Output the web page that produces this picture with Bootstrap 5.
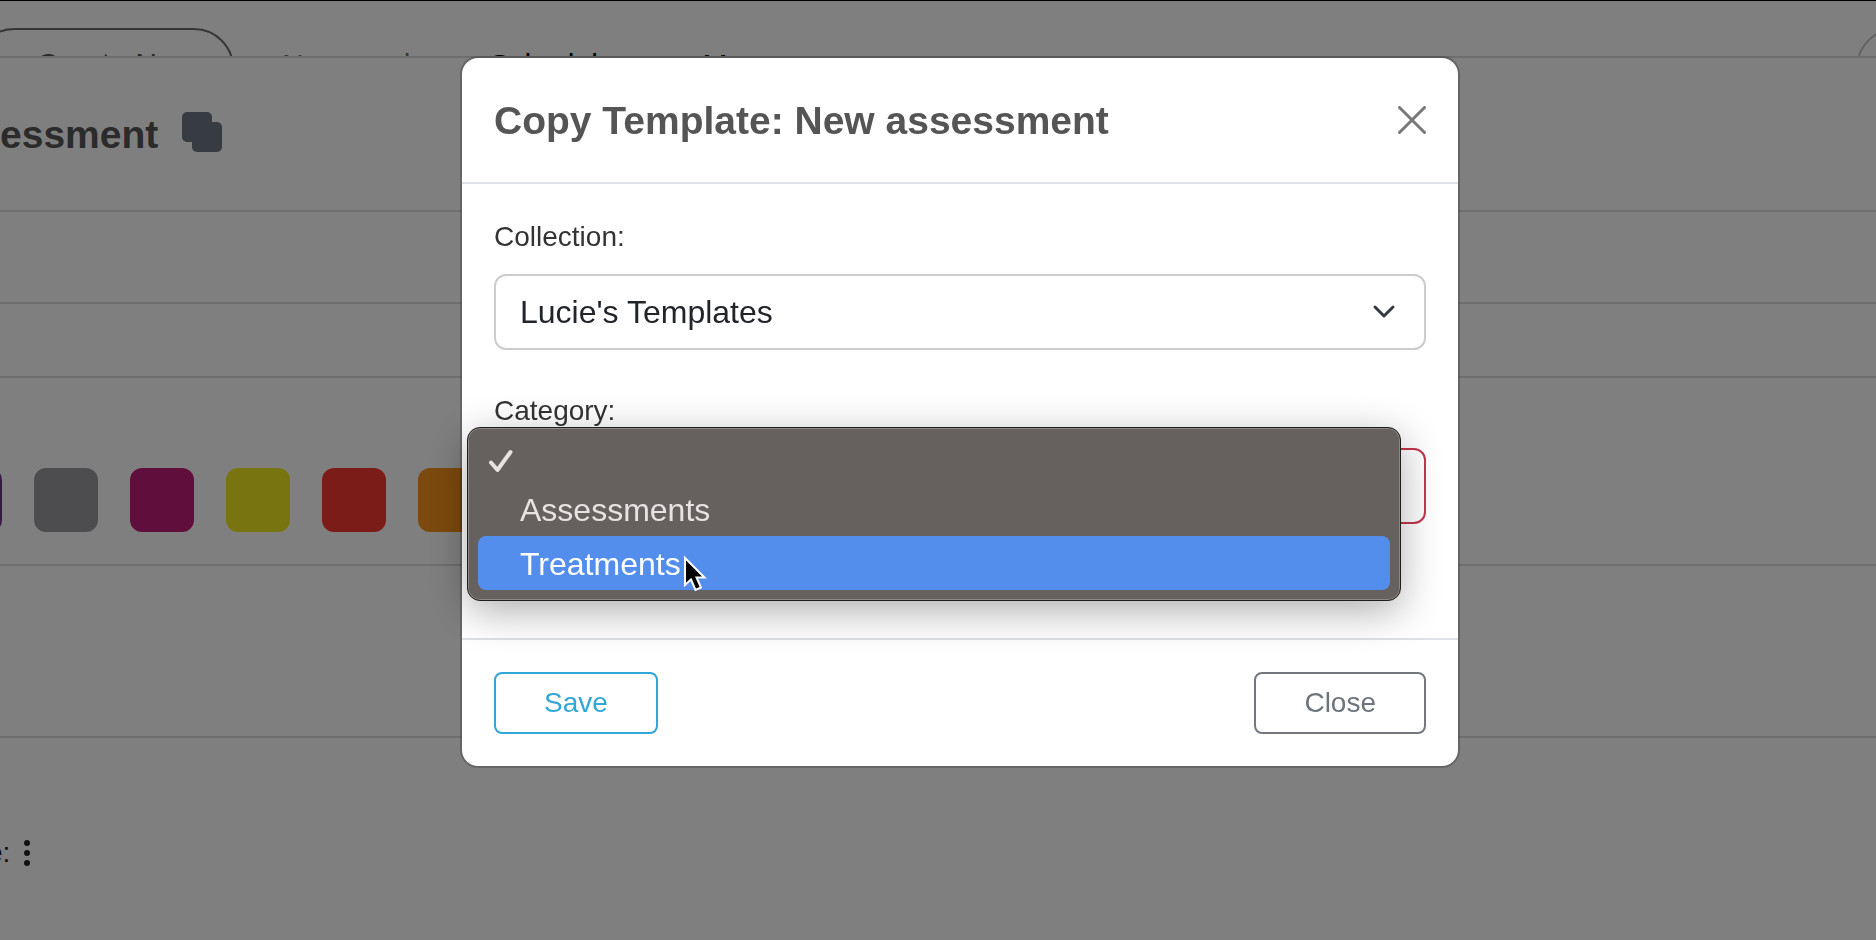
<!DOCTYPE html>
<html lang="en">
<head>
<meta charset="utf-8">
<meta name="viewport" content="width=device-width, initial-scale=1">
<title>Copy Template</title>
<link href="https://cdn.jsdelivr.net/npm/bootstrap@5.3.0/dist/css/bootstrap.min.css" rel="stylesheet">
<style>
  body { font-family: "Liberation Sans", Arial, sans-serif; font-size: 28px; line-height: 42px; color: #212529; background: #fff; }
  .page-shell { height: 100vh; overflow: hidden; border-top: 1px solid #000; }

  /* top bar, partly scrolled under the editor panel */
  .top-strip { height: 57px; overflow: hidden; padding-top: 27px; border-bottom: 2px solid #dcdcdc; gap: 48px; }
  .create-btn { flex: none; height: 80px; width: 260px; margin-left: -26px; padding: 0 0 8px 24px; border: 2px solid #6c6c6c; border-radius: 40px; font-size: 30px; line-height: 60px; color: #565656; }
  .strip-link { font-size: 30px; line-height: 74px; text-decoration: none; white-space: nowrap; }
  .strip-gap { gap: 64px; }
  .avatar-ring { flex: none; width: 80px; height: 80px; border: 2px solid #c8c8c8; border-radius: 50%; margin-right: -60px; }

  /* editor panel rows */
  .panel-row { border-bottom: 2px solid #dcdcdc; }
  .row-title { height: 154px; gap: 24px; }
  .row-title h1 { font-size: 39px; line-height: 60px; padding-top: 2px; font-weight: 700; color: #565656; }
  .row-a { height: 92px; }
  .row-b { height: 74px; }
  .row-swatches { height: 188px; gap: 32px; margin-left: -62px; padding-top: 58px; }
  .row-c { height: 172px; }
  .row-field { padding-top: 94px; margin-left: -13px; gap: 13px; }
  .swatch-btn { flex: none; width: 64px; height: 64px; border: 0; border-radius: 12px; }

  /* dialog */
  .copy-modal { padding-left: 44px; }
  .copy-modal .modal-dialog { max-width: 1000px; margin: 56px auto 0; }
  .copy-modal .modal-content { border: 2px solid rgba(0,0,0,.2); border-radius: 18px; }
  .copy-modal .modal-header { padding: 32px; border-bottom: 2px solid #dee2e6; }
  .copy-modal .modal-title { font-size: 39px; line-height: 58px; padding-top: 2px; font-weight: 700; color: #555; }
  .x-btn { width: 28px; height: 28px; color: #777; }
  .copy-modal .modal-body { padding: 32px 32px 114px; }
  .copy-modal .form-label { display: block; margin-bottom: 16px; color: #333; }
  .copy-modal .form-select { height: 76px; padding: 0 72px 0 24px; border: 2px solid #ccc; border-radius: 12px; font-size: 32px; line-height: 48px; color: #212529;
    background-image: url("data:image/svg+xml,%3csvg xmlns='http://www.w3.org/2000/svg' viewBox='0 0 24 24'%3e%3cpath fill='none' stroke='%23343a40' stroke-width='3' stroke-linecap='round' stroke-linejoin='round' d='m3 7 9 9 9-9'/%3e%3c/svg%3e");
    background-size: 24px 24px; background-position: right 28px center; }
  .copy-modal .form-select.needs-value { border-color: #c5364b; background-image: none; }
  .second-field { margin-top: 40px; }
  .option-menu { position: absolute; top: -21px; left: -27px; right: 25px; padding: 8px 10px 10px; border: 1px solid #1f1d1d; border-radius: 13px; background: #66615f; box-shadow: inset 0 0 0 1px #8d8987, 0 10px 40px rgba(0,0,0,.32); color: #e8e2e2; font-size: 32px; line-height: 52px; }
  .option-menu li { padding: 2px 0 0 42px; border-radius: 8px; }
  .option-menu li.picked { height: 46px; padding: 4px 0 0 10px; display: flex; align-items: center; }
  .option-menu li.hovered { background: #538eed; color: #fff; }
  .pointer { position: absolute; left: 215px; top: 127px; }
  .copy-modal .modal-footer { padding: 32px; border-top: 2px solid #dee2e6; }
  .copy-modal .modal-footer > * { margin: 0; }
  .foot-btn { padding: 8px 48px; border-width: 2px; border-radius: 8px; font-size: 28px; line-height: 42px; }
  .save-btn { color: #32a6d6; border-color: #32a6d6; }
  .close-btn { color: #6c757d; border-color: #74777d; }
</style>
</head>
<body>
<div class="page-shell">
  <header class="top-strip d-flex align-items-start">
    <button type="button" class="create-btn bg-transparent">Create New</button>
    <nav class="d-flex strip-gap">
      <a href="#" class="strip-link text-secondary">Name only</a>
      <a href="#" class="strip-link text-black">Schedule</a>
      <a href="#" class="strip-link text-black ms-4">More</a>
    </nav>
    <span class="avatar-ring ms-auto"></span>
  </header>
  <main>
    <div class="panel-row row-title d-flex align-items-center">
      <h1 class="mb-0">essment</h1>
      <button type="button" class="btn p-0 pb-1 border-0 d-flex" aria-label="Copy template">
        <svg width="40" height="40" viewBox="0 0 40 40" fill="#6e7684"><rect width="30" height="30" rx="5"/><rect x="10" y="10" width="30" height="30" rx="5"/></svg>
      </button>
    </div>
    <div class="panel-row row-a"></div>
    <div class="panel-row row-b"></div>
    <div class="panel-row row-swatches d-flex align-items-center">
      <button type="button" class="swatch-btn" style="background:#74348a" aria-label="Violet"></button>
      <button type="button" class="swatch-btn" style="background:#9a9a9e" aria-label="Grey"></button>
      <button type="button" class="swatch-btn" style="background:#c01c78" aria-label="Magenta"></button>
      <button type="button" class="swatch-btn" style="background:#f0e81e" aria-label="Yellow"></button>
      <button type="button" class="swatch-btn" style="background:#f83830" aria-label="Red"></button>
      <button type="button" class="swatch-btn" style="background:#f8941c" aria-label="Orange"></button>
    </div>
    <div class="panel-row row-c"></div>
    <div class="row-field d-flex align-items-center">
      <span>e:</span>
      <button type="button" class="btn p-0 border-0 d-flex" aria-label="More options">
        <svg width="8" height="28" viewBox="0 0 8 28" fill="#212529"><circle cx="4" cy="4" r="3"/><circle cx="4" cy="14" r="3"/><circle cx="4" cy="24" r="3"/></svg>
      </button>
    </div>
  </main>
</div>

<div class="modal-backdrop show"></div>

<div class="modal copy-modal d-block show" role="dialog" aria-labelledby="dialogTitle" aria-modal="true">
  <div class="modal-dialog">
    <div class="modal-content">
      <div class="modal-header">
        <h2 class="modal-title" id="dialogTitle">Copy Template: New assessment</h2>
        <button type="button" class="btn x-btn p-0 border-0 d-flex" aria-label="Close dialog">
          <svg width="28" height="28" viewBox="0 0 28 28" fill="none" stroke="currentColor" stroke-width="3" stroke-linecap="round"><path d="M1.500 1.500 26.500 26.500M26.500 1.500 1.500 26.500"/></svg>
        </button>
      </div>
      <div class="modal-body">
        <label class="form-label" for="collection">Collection:</label>
        <select class="form-select" id="collection"><option>Lucie's Templates</option></select>
        <div class="second-field">
          <label class="form-label" for="category">Category:</label>
          <div class="position-relative">
            <select class="form-select needs-value" id="category"><option></option></select>
            <ul class="option-menu list-unstyled mb-0">
              <li class="picked"><svg width="26" height="26" viewBox="0 0 26 26" fill="none" stroke="currentColor" stroke-width="4" stroke-linecap="round" stroke-linejoin="round"><path d="M3 14.500 9.500 22 22.500 4"/></svg></li>
              <li>Assessments</li>
              <li class="hovered">Treatments</li>
              <li class="pointer p-0"><svg class="d-block" width="24" height="38" viewBox="0 0 24 38"><path d="M2 3V30L8 24.500 12.500 35 18 32.500 13.500 22.500H21.500Z" fill="#000" stroke="#fff" stroke-width="2"/></svg></li>
            </ul>
          </div>
        </div>
      </div>
      <div class="modal-footer justify-content-between">
        <button type="button" class="btn foot-btn save-btn">Save</button>
        <button type="button" class="btn foot-btn close-btn">Close</button>
      </div>
    </div>
  </div>
</div>
<script src="https://cdn.jsdelivr.net/npm/bootstrap@5.3.0/dist/js/bootstrap.bundle.min.js"></script>
</body>
</html>
